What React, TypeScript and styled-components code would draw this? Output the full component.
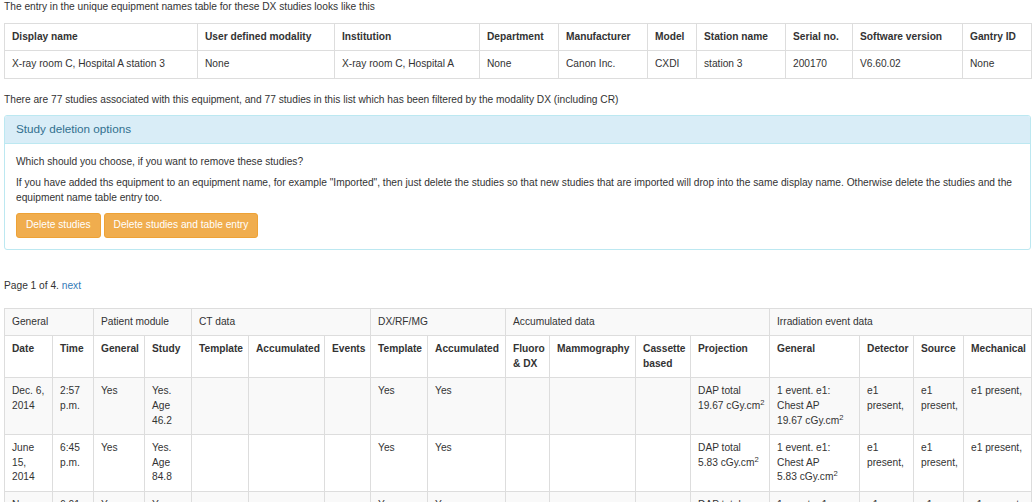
import styled, { createGlobalStyle } from 'styled-components';

const GlobalStyle = createGlobalStyle`
  html, body {
    margin: 0;
    padding: 0;
    overflow: hidden;
    background: #fff;
  }
  body {
    font-family: "Liberation Sans", Arial, Helvetica, sans-serif;
    font-size: 10.2px;
    line-height: 1.428571;
    color: #333;
  }
  sup {
    font-size: 75%;
    line-height: 0;
    position: relative;
    vertical-align: baseline;
    top: -0.5em;
  }
`;

const Page = styled.div`
  padding: 0 5px 0 4px;
`;

const Para = styled.p<{ $gap?: number }>`
  margin: 0 0 ${p => p.$gap ?? 7.3}px;
`;

const Table = styled.table<{ $striped?: boolean }>`
  width: 100%;
  table-layout: fixed;
  border-collapse: collapse;
  border-spacing: 0;
  border: 1px solid #ddd;
  margin-bottom: 14.6px;

  ${p => p.$striped && `
    tbody tr:nth-of-type(odd) { background: #f9f9f9; }
  `}
`;

const Th = styled.th`
  text-align: left;
  vertical-align: top;
  font-weight: bold;
  padding: 6px 5px 6px 7px;
  border: 1px solid #ddd;
`;

const GroupCell = styled.td`
  text-align: left;
  vertical-align: top;
  padding: 6px 5px 6px 7px;
  border: 1px solid #ddd;
`;

const Td = styled.td`
  vertical-align: top;
  padding: 6px 5px 6px 7px;
  border: 1px solid #ddd;
`;

const NoWrap = styled.span`
  white-space: nowrap;
`;

const Panel = styled.div`
  border: 1px solid #bce8f1;
  border-radius: 3px;
  margin-bottom: 14.6px;
  background: #fff;
`;

const PanelHeading = styled.div`
  background: #d9edf7;
  color: #31708f;
  border-bottom: 1px solid #bce8f1;
  border-radius: 2px 2px 0 0;
  padding: 7px 11px;
  font-size: 11.7px;
  line-height: 1.1;
`;

const PanelBody = styled.div`
  padding: 10.5px 11px;
`;

const ButtonRow = styled.div`
  display: flex;
  gap: 3px;
`;

const WarnButton = styled.button`
  font-family: inherit;
  font-size: 10.2px;
  line-height: 1.428571;
  color: #fff;
  background: #f0ad4e;
  border: 1px solid #eea236;
  border-radius: 3px;
  padding: 4.4px 9px;
  cursor: pointer;
`;

const PageInfo = styled.p`
  margin: 29px 0 14.6px;
`;

const Link = styled.a`
  color: #337ab7;
  text-decoration: none;
`;

const equipCols = [193, 137, 145, 79, 89, 49, 89, 67, 110, 69];
const equipHead = [
  'Display name', 'User defined modality', 'Institution', 'Department', 'Manufacturer',
  'Model', 'Station name', 'Serial no.', 'Software version', 'Gantry ID',
];
const equipRow = [
  'X-ray room C, Hospital A station 3', 'None', 'X-ray room C, Hospital A', 'None', 'Canon Inc.',
  'CXDI', 'station 3', '200170', 'V6.60.02', 'None',
];

const dataCols = [48, 41, 51, 47, 57, 76, 46, 57, 78, 44, 86, 55, 79, 90, 54, 50, 68];
const groups: [string, number][] = [
  ['General', 2], ['Patient module', 2], ['CT data', 3], ['DX/RF/MG', 2],
  ['Accumulated data', 4], ['Irradiation event data', 4],
];
const dataHead = [
  'Date', 'Time', 'General', 'Study', 'Template', 'Accumulated', 'Events', 'Template',
  'Accumulated', 'Fluoro & DX', 'Mammography', 'Cassette based', 'Projection', 'General',
  'Detector', 'Source', 'Mechanical',
];

const Dap = ({ v }: { v: string }) => (
  <NoWrap>{v} cGy.cm<sup>2</sup></NoWrap>
);

const studies = [
  { date: 'Dec. 6, 2014', time: '2:57 p.m.', age: '46.2', dap: '19.67' },
  { date: 'June 15, 2014', time: '6:45 p.m.', age: '84.8', dap: '5.83' },
  { date: 'Nov. 29, 2014', time: '6:01 p.m.', age: '62.1', dap: '11.40' },
];

export default function App() {
  return (
    <>
      <GlobalStyle />
      <Page>
        <Para $gap={8}>The entry in the unique equipment names table for these DX studies looks like this</Para>
        <Table>
          <colgroup>
            {equipCols.map((w, i) => <col key={i} style={{ width: w }} />)}
          </colgroup>
          <thead>
            <tr>{equipHead.map(h => <Th key={h}>{h}</Th>)}</tr>
          </thead>
          <tbody>
            <tr>{equipRow.map((c, i) => <Td key={i}>{c}</Td>)}</tr>
          </tbody>
        </Table>

        <Para>There are 77 studies associated with this equipment, and 77 studies in this list which has been filtered by the modality DX (including CR)</Para>

        <Panel>
          <PanelHeading>Study deletion options</PanelHeading>
          <PanelBody>
            <Para>Which should you choose, if you want to remove these studies?</Para>
            <Para>
              If you have added ths equipment to an equipment name, for example "Imported", then just delete the studies so that new studies that are imported will drop into the same display name. Otherwise delete the studies and the equipment name table entry too.
            </Para>
            <ButtonRow>
              <WarnButton>Delete studies</WarnButton>
              <WarnButton>Delete studies and table entry</WarnButton>
            </ButtonRow>
          </PanelBody>
        </Panel>

        <PageInfo>Page 1 of 4. <Link href="#">next</Link></PageInfo>

        <Table $striped>
          <colgroup>
            {dataCols.map((w, i) => <col key={i} style={{ width: w }} />)}
          </colgroup>
          <tbody>
            <tr>
              {groups.map(([g, n]) => <GroupCell key={g} colSpan={n}>{g}</GroupCell>)}
            </tr>
            <tr>{dataHead.map((h, i) => <Th key={i}>{h}</Th>)}</tr>
            {studies.map(s => (
              <tr key={s.date}>
                <Td>{s.date}</Td>
                <Td>{s.time}</Td>
                <Td>Yes</Td>
                <Td>Yes. Age {s.age}</Td>
                <Td />
                <Td />
                <Td />
                <Td>Yes</Td>
                <Td>Yes</Td>
                <Td />
                <Td />
                <Td />
                <Td>DAP total<br /><Dap v={s.dap} /></Td>
                <Td>1 event. e1: Chest AP<br /><Dap v={s.dap} /></Td>
                <Td>e1 present,</Td>
                <Td>e1 present,</Td>
                <Td>e1 present,</Td>
              </tr>
            ))}
          </tbody>
        </Table>
      </Page>
    </>
  );
}
